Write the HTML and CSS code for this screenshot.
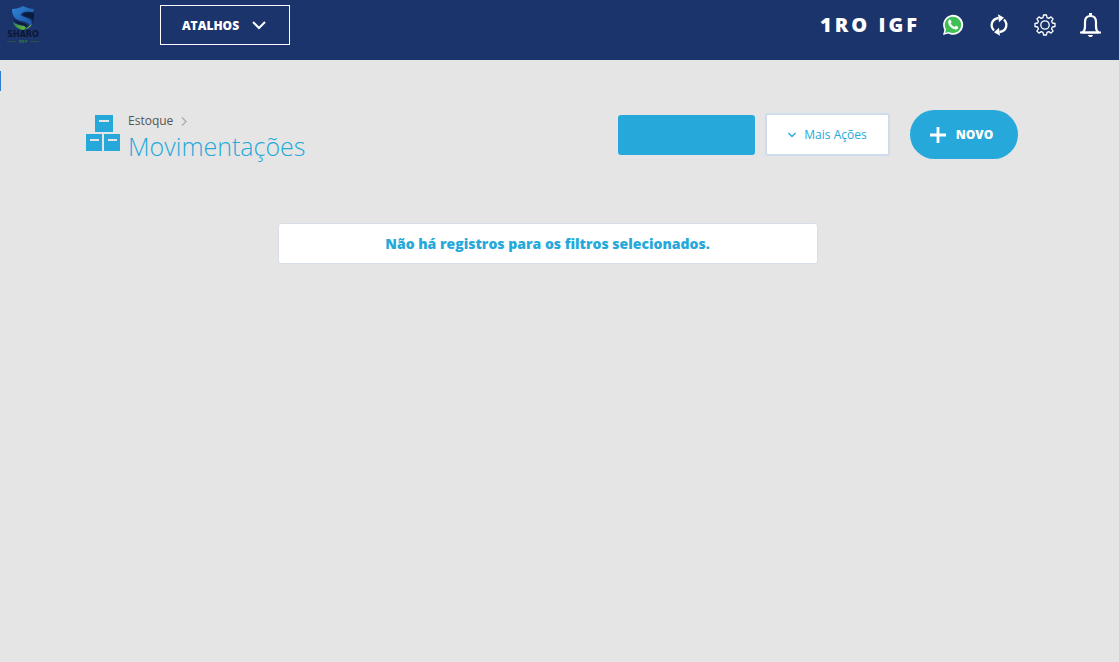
FILE: index.html
```html
<!DOCTYPE html>
<html lang="pt-BR">
<head>
  <meta charset="UTF-8">
  <meta name="viewport" content="width=device-width, initial-scale=1.0">
  <title>Movimentações - Estoque</title>
  <link rel="stylesheet" href="styles.css">
</head>
<body>
  <header class="topbar">
    <a href="#" class="logo" aria-label="Sharo ERP">
      <svg width="36" height="38" viewBox="0 0 36 38">
        <defs>
          <linearGradient id="blue" x1="0" y1="0" x2="1" y2="1">
            <stop offset="0" stop-color="#2f86d8"/>
            <stop offset="1" stop-color="#1b4fa0"/>
          </linearGradient>
          <linearGradient id="green" x1="0" y1="0" x2="1" y2="0">
            <stop offset="0" stop-color="#2f8f4c"/>
            <stop offset="1" stop-color="#7fc93c"/>
          </linearGradient>
        </defs>
        <path fill="url(#blue)" d="M7 3c4 0 8-1 11-3 4 2 7 3 11 3l-1 3c-5-1-10-1-12 2-1 1 0 2 1 2l7 3c3 2 4 4 1 7-1-3-4-4-8-5-6-1-10-4-10-12z"/>
        <path fill="#0c1c3c" d="M29 7c-4-1-9-1-11 1-1 1 0 1 1 2l6 2c3 1 3 3 2 6 2-3 2-7 2-11zM8 12c2 3 6 4 10 5 3 1 5 2 5 4-4-2-13-2-15-9z"/>
        <path fill="url(#green)" d="M8 16c3 3 7 3 11 4 2 1 2 2 0 4l8-6c-1 3-5 5-9 6-5-1-9-4-10-8z"/>
      
        <text class="logo-name" x="18" y="31" text-anchor="middle">SHARO</text>
        <path stroke="#24543f" d="M2 35.500h9M25 35.500h9"/>
        <text class="logo-sub" x="18" y="37" text-anchor="middle">ERP</text>
      </svg>
    </a>
    <button type="button" class="shortcuts">
      ATALHOS
      <svg width="14" height="9" viewBox="0 0 14 9" fill="none" stroke="#fff" stroke-width="2"><path d="M1 1l6 6 6-6"/></svg>
    </button>
    <span class="company">1RO IGF</span>
    <nav class="tools">
      <a href="#" class="tool" aria-label="WhatsApp">
        <svg width="22" height="22" viewBox="0 0 22 22">
          <path fill="#fff" d="M1 21l1.400-5.300A10 10 0 1 1 6.300 19.600z"/>
          <path fill="#3fbf55" d="M3.100 18.900l1-3.500a8.200 8.200 0 1 1 2.600 2.500z"/>
          <path fill="#fff" d="M7.200 5.800c.5-.5 1.200-.4 1.500.2l.8 1.900c.1.400-.5 1-.8 1.400.8 1.700 2 2.900 3.800 3.600.5-.4 1-1.300 1.400-1.200l2 1c.6.300.1 1.700-.4 2.200-1 .8-2.200.8-3.600.2-2.500-1-4.400-2.900-5.400-5.200-.5-1.400-.4-3 .7-4.100z"/>
        </svg>
      </a>
      <button type="button" class="tool" aria-label="Atualizar">
        <svg width="22" height="22" viewBox="0 0 22 22">
          <g fill="none" stroke="#fff" stroke-width="2.300">
            <path d="M6 16.500C2 12.500 3 5 10.500 4"/>
            <path d="M16 5.500c4 4 3 11.500-4.500 12.500"/>
          </g>
          <path fill="#fff" d="M10 .3l6 3.400-5 4.600zM12 21.700l-6-3.400 5-4.600z"/>
        </svg>
      </button>
      <button type="button" class="tool" aria-label="Configurações">
        <svg width="22" height="22" viewBox="0 0 22 22" fill="none" stroke="#fff" stroke-width="1.300" stroke-linejoin="round">
          <path d="M9.500 1h3l.5 2.600 1.800.8L17 2.900 19.100 5l-1.500 2.200.8 1.800 2.600.5v3l-2.600.5-.8 1.800 1.500 2.200-2.100 2.100-2.200-1.500-1.800.8-.5 2.600h-3L9 18.400l-1.800-.8L5 19.100 2.900 17l1.500-2.200-.8-1.800L1 12.500v-3L3.600 9l.8-1.800L2.900 5 5 2.900l2.200 1.500L9 3.600z"/>
          <circle cx="11" cy="11" r="4.200"/>
        </svg>
      </button>
      <button type="button" class="tool" aria-label="Notificações">
        <svg width="21" height="24" viewBox="0 0 21 24">
          <path fill="none" stroke="#fff" stroke-width="2.200" stroke-linejoin="round" d="M2.500 19.500c2-1.500 2.500-3 2.500-6V9c0-4 2.200-6 5.500-6S16 5 16 9v4.500c0 3 .5 4.500 2.500 6z"/>
          <path fill="#fff" d="M9 0h3v3H9zM0 18.500h21v2H0zM8 22h5c-.5 1.500-1.300 2-2.500 2S8.500 23.500 8 22z"/>
        </svg>
      </button>
    </nav>
  </header>

  <button type="button" class="side-tab" aria-label="Abrir menu"></button>

  <main>
    <div class="page-header">
      <svg class="page-icon" width="34" height="36" viewBox="0 0 34 36">
        <path fill="#26a9da" d="M9 0h18v17H9zM0 19h16v17H0zM18 19h16v17H18z"/>
        <path fill="#e5e5e5" d="M13 5h10v2H13zM4 24h9v2H4zM22 24h9v2h-9z"/>
      </svg>
      <div class="page-title">
        <div class="breadcrumb">
          <a href="#">Estoque</a>
          <svg width="6" height="9" viewBox="0 0 6 9" fill="none" stroke="#aaa" stroke-width="1.200"><path d="M1 .5l4 4-4 4"/></svg>
        </div>
        <h1>Movimentações</h1>
      </div>
      <div class="actions">
        <button type="button" class="btn btn-filter" aria-label="Filtros"></button>
        <button type="button" class="btn btn-more">
          <svg width="8" height="6" viewBox="0 0 8 6" fill="none" stroke="#26a9da" stroke-width="1.400"><path d="M.5 1L4 4.500 7.500 1"/></svg>
          Mais Ações
        </button>
        <button type="button" class="btn btn-new">
          <svg width="16" height="16" viewBox="0 0 16 16" fill="none" stroke="#fff" stroke-width="2.800"><path d="M8 0v16M0 8h16"/></svg>
          NOVO
        </button>
      </div>
    </div>

    <div class="list">
      <p class="empty">Não há registros para os filtros selecionados.</p>
    </div>
  </main>
</body>
</html>
```

FILE: styles.css
```css
:root {
  --color-bg: #e5e5e5;
  --color-bar: #1b346c;
  --color-blue: #26a9da;
  --color-border: #d0dcec;
}

* {
  box-sizing: border-box;
}

body {
  margin: 0;
  background-color: var(--color-bg);
  font-family: "Open Sans", "Liberation Sans", sans-serif;
  font-size: 12px;
}

button {
  font-family: inherit;
  cursor: pointer;
}

svg {
  display: block;
}

.topbar {
  display: flex;
  align-items: center;
  height: 60px;
  padding: 0 18px 10px 5px;
  background-color: var(--color-bar);
}

.logo {
  width: 155px;
}

.logo-name {
  font-family: "DejaVu Sans", sans-serif;
  font-size: 8px;
  font-weight: 700;
  fill: #0c1730;
}

.logo-sub {
  font-family: "DejaVu Sans", sans-serif;
  font-size: 4px;
  font-weight: 700;
  fill: #2f7048;
}

.shortcuts {
  display: flex;
  align-items: center;
  justify-content: center;
  gap: 13px;
  width: 130px;
  height: 40px;
  padding: 0 2px 0 0;
  border: 1px solid #fff;
  background: none;
  color: #fff;
  font-size: 12px;
  font-weight: 800;
}

.company {
  margin-left: auto;
  color: #fff;
  font-size: 20px;
  font-weight: 800;
  line-height: 26px;
  letter-spacing: 3px;
}

.tools {
  display: flex;
  align-items: center;
  gap: 24px;
  margin-left: 22px;
}

.tool {
  padding: 0;
  border: none;
  background: none;
}

/* edge of the collapsed side menu */
.side-tab {
  position: absolute;
  top: 71px;
  left: 0;
  width: 1px;
  height: 20px;
  padding: 0;
  border: none;
  background-color: #2f7fd0;
}

.page-header {
  display: flex;
  align-items: flex-start;
  padding: 50px 101px 0 86px;
}

.page-icon {
  margin-top: 5px;
}

.page-title {
  margin-left: 8px;
}

.breadcrumb {
  display: flex;
  align-items: center;
  gap: 8px;
  line-height: 22px;
}

.breadcrumb a {
  color: #555;
  text-decoration: none;
}

h1 {
  margin: 0;
  color: var(--color-blue);
  font-size: 25px;
  font-weight: 300;
  line-height: 28px;
}

.actions {
  display: flex;
  align-items: center;
  margin-left: auto;
}

.btn {
  display: flex;
  align-items: center;
  justify-content: center;
  padding: 0;
  border: none;
  border-radius: 3px;
}

.btn-filter {
  width: 137px;
  height: 40px;
  background-color: var(--color-blue);
}

.btn-more {
  gap: 8px;
  width: 125px;
  height: 43px;
  margin: 0 20px 0 10px;
  border: 2px solid var(--color-border);
  background-color: #fff;
  color: var(--color-blue);
  font-size: 12px;
}

.btn-new {
  gap: 10px;
  width: 108px;
  height: 49px;
  padding-right: 5px;
  border-radius: 25px;
  background-color: var(--color-blue);
  color: #fff;
  font-size: 12px;
  font-weight: 800;
}

.list {
  padding: 63px 24px 0 0;
}

.empty {
  max-width: 540px;
  margin: 0 auto;
  padding: 9px;
  border: 1px solid #d8dee8;
  border-radius: 3px;
  background-color: #fff;
  color: var(--color-blue);
  font-size: 14px;
  font-weight: 800;
  line-height: 21px;
  text-align: center;
}
```
